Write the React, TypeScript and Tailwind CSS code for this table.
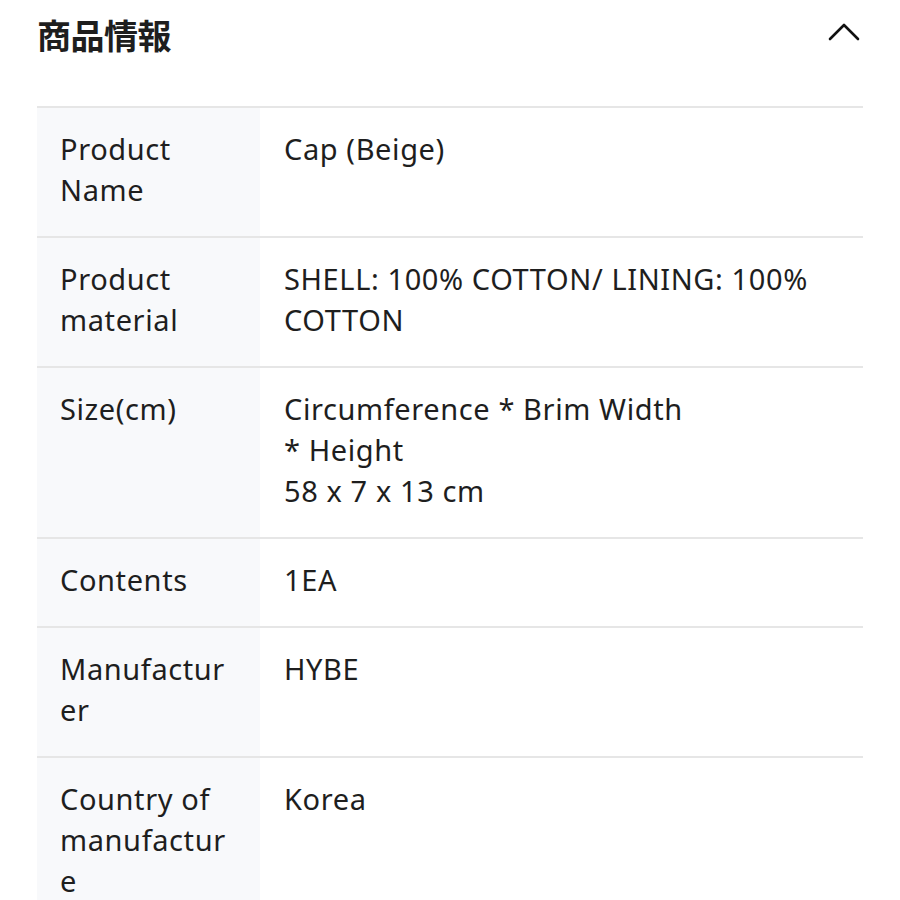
const rows: { label: string; value: string[] }[] = [
  { label: "Product Name", value: ["Cap (Beige)"] },
  { label: "Product material", value: ["SHELL: 100% COTTON/ LINING: 100% COTTON"] },
  { label: "Size(cm)", value: ["Circumference * Brim Width", "* Height", "58 x 7 x 13 cm"] },
  { label: "Contents", value: ["1EA"] },
  { label: "Manufacturer", value: ["HYBE"] },
  { label: "Country of manufacture", value: ["Korea"] },
];

export default function App() {
  return (
    <div className="min-h-screen bg-white text-[#1e1e1e] font-['Noto_Sans','Noto_Sans_CJK_JP',sans-serif]">
      {/* Header */}
      <div className="flex items-start justify-between pl-[37px] pr-[40px] pt-[12px] h-[106px]">
        <h2 className="text-[34px] font-bold leading-[46px] font-['Noto_Sans_CJK_JP',sans-serif] tracking-[-0.5px]">
          商品情報
        </h2>
        <svg className="mt-[10px]" width="32" height="20" viewBox="0 0 32 20" fill="none">
          <path d="M2 17 L16 3 L30 17" stroke="#111" strokeWidth="2.6" strokeLinecap="round" strokeLinejoin="round" />
        </svg>
      </div>

      {/* Table */}
      <div className="mx-[37px] border-t-2 border-[#e6e6e6]">
        {rows.map((r) => (
          <div key={r.label} className="flex border-b-2 border-[#e6e6e6] text-[29px] leading-[41px] tracking-[0.6px]">
            <div className="w-[223px] shrink-0 bg-[#f8f9fb] pl-[23px] pr-[25px] pt-[20px] pb-[26px] break-words">
              {r.label}
            </div>
            <div className="flex-1 pl-[24px] pr-[24px] pt-[20px] pb-[26px]">
              {r.value.map((v) => (
                <div key={v}>{v}</div>
              ))}
            </div>
          </div>
        ))}
      </div>
    </div>
  );
}
